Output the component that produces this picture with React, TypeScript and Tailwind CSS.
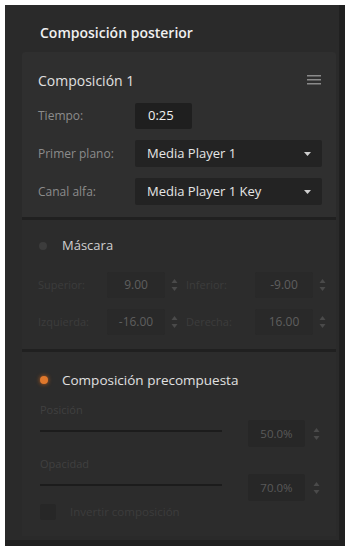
const font = { fontFamily: '"Open Sans", "Liberation Sans", sans-serif' }

function Stepper({ dim = false }: { dim?: boolean }) {
  const c = dim ? 'fill-[#4a4a4a]' : 'fill-[#8a8a8a]'
  return (
    <svg width="7" height="16" viewBox="0 0 7 16" className="shrink-0">
      <path d="M0.5 6 L3.5 2 L6.5 6 Z" className={c} />
      <path d="M0.5 10 L3.5 14 L6.5 10 Z" className={c} />
    </svg>
  )
}

function Dropdown({ value }: { value: string }) {
  return (
    <div className="flex h-[27px] w-[187px] items-center justify-between rounded-[2px] bg-[#232323] pl-3 pr-[11px]">
      <span className="text-[13px] text-[#e6e6e6]">{value}</span>
      <svg width="7" height="4" viewBox="0 0 7 4">
        <path d="M0 0 L7 0 L3.5 4 Z" fill="#d0d0d0" />
      </svg>
    </div>
  )
}

function MaskField({ label, value }: { label: string; value: string }) {
  return (
    <div className="flex items-center">
      <span className="w-[69px] text-[11px] text-[#3c3c3c]">{label}</span>
      <div className="flex h-[26px] w-[58px] items-center justify-center rounded-[2px] bg-[#292929] text-[12px] text-[#5f5f5f]">
        {value}
      </div>
      <div className="ml-[6px]">
        <Stepper dim />
      </div>
    </div>
  )
}

function SliderRow({ label, value }: { label: string; value: string }) {
  return (
    <div className="flex items-end">
      <div className="flex w-[182px] flex-col">
        <span className="text-[11px] leading-[14px] text-[#404040]">{label}</span>
        <div className="mt-[13px] h-[2px] w-full bg-[#1c1c1c]" />
        <div className="h-[15px]" />
      </div>
      <div className="ml-[26px] flex h-[27px] w-[57px] items-center justify-center rounded-[2px] bg-[#272727] text-[11.5px] text-[#5a5a5a]">
        {value}
      </div>
      <div className="mb-[5px] ml-[8px]">
        <Stepper dim />
      </div>
    </div>
  )
}

export default function App() {
  return (
    <div className="min-h-[551px] w-[351px] bg-white pl-[5px] pt-[5px]" style={font}>
      <div className="flex h-[541px] w-[340px] flex-col border-b-[6px] border-r-[6px] border-[#202020] bg-[#2a2a2a]">
        {/* title */}
        <div className="flex h-[47px] items-center pl-[35px] pt-[8px]">
          <span className="text-[14px] font-semibold text-[#f0f0f0]">Composición posterior</span>
        </div>

        <div className="ml-[17px] flex w-[314px] flex-col">
          {/* Composición 1 */}
          <div className="flex flex-col rounded-t-[3px] bg-[#2f2f2f] pb-[12px] pl-[16px] pr-[14px] pt-[17px]">
            <div className="flex h-[22px] items-center justify-between">
              <span className="text-[14px] text-[#e0e0e0]">Composición 1</span>
              <svg width="14" height="10" viewBox="0 0 14 10" className="mr-[1px]">
                <rect x="0" y="0" width="14" height="1.5" fill="#8a8a8a" />
                <rect x="0" y="4" width="14" height="1.5" fill="#8a8a8a" />
                <rect x="0" y="8" width="14" height="1.5" fill="#8a8a8a" />
              </svg>
            </div>
            <div className="mt-[12px] flex flex-col gap-[11px]">
              <div className="flex items-center">
                <span className="w-[97px] text-[12px] text-[#8c8c8c]">Tiempo:</span>
                <div className="flex h-[26px] w-[57px] items-center rounded-[2px] bg-[#1f1f1f] pl-[13px] text-[13px] text-[#f0f0f0]">
                  0:25
                </div>
              </div>
              <div className="flex items-center">
                <span className="w-[97px] text-[12px] text-[#8c8c8c]">Primer plano:</span>
                <Dropdown value="Media Player 1" />
              </div>
              <div className="flex items-center">
                <span className="w-[97px] text-[12px] text-[#8c8c8c]">Canal alfa:</span>
                <Dropdown value="Media Player 1 Key" />
              </div>
            </div>
          </div>

          {/* Máscara */}
          <div className="flex h-[132px] flex-col border-t-[3px] border-[#202020] bg-[#2c2c2c] pl-[16px] pr-[14px] pt-[18px]">
            <div className="flex h-[16px] items-center">
              <span className="ml-[1px] h-[8px] w-[8px] rounded-full bg-[#3c3c3c]" />
              <span className="ml-[15px] text-[13px] text-[#d0d0d0]">Máscara</span>
            </div>
            <div className="mt-[18px] flex flex-col gap-[11px]">
              <div className="flex items-center gap-[8px]">
                <MaskField label="Superior:" value="9.00" />
                <MaskField label="Inferior:" value="-9.00" />
              </div>
              <div className="flex items-center gap-[8px]">
                <MaskField label="Izquierda:" value="-16.00" />
                <MaskField label="Derecha:" value="16.00" />
              </div>
            </div>
          </div>

          {/* Composición precompuesta */}
          <div className="flex h-[187px] flex-col border-t-[3px] border-[#202020] bg-[#2c2c2c] pl-[18px] pr-[14px] pt-[19px]">
            <div className="flex h-[18px] items-center">
              <span className="h-[8px] w-[8px] rounded-full bg-[#e0782c] shadow-[0_0_4px_#c0601c]" />
              <span className="ml-[14px] text-[13.5px] text-[#e0e0e0]">Composición precompuesta</span>
            </div>
            <div className="mt-[14px] flex flex-col gap-[10px]">
              <SliderRow label="Posición" value="50.0%" />
              <SliderRow label="Opacidad" value="70.0%" />
            </div>
            <div className="mt-[2px] flex items-center">
              <span className="h-[16px] w-[16px] rounded-[2px] bg-[#272727]" />
              <span className="ml-[14px] text-[11.5px] text-[#3c3c3c]">Invertir composición</span>
            </div>
          </div>
        </div>
      </div>
    </div>
  )
}
